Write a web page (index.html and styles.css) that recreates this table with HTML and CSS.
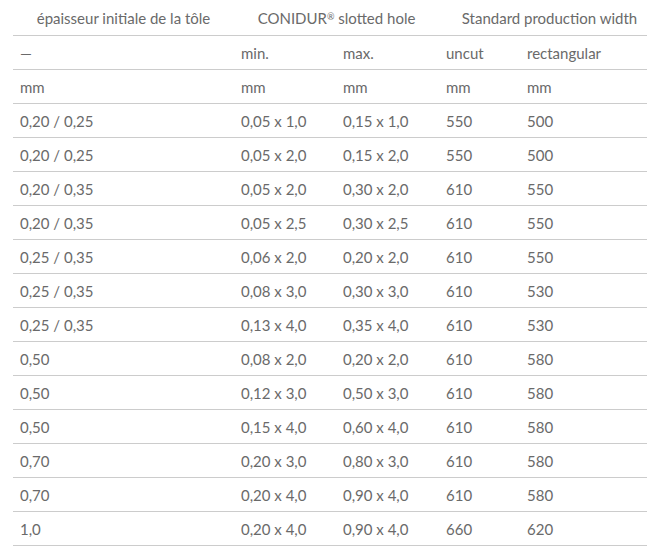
FILE: index.html
```html
<!DOCTYPE html>
<html lang="fr">
<head>
<meta charset="utf-8">
<title>CONIDUR slotted hole</title>
<link rel="stylesheet" href="styles.css">
</head>
<body>
<div class="wrap">
<table class="spec">
<colgroup>
<col class="c1"><col class="c2"><col class="c3"><col class="c4"><col class="c5">
</colgroup>
<thead>
<tr class="head">
<th>épaisseur initiale de la tôle</th>
<th colspan="2">CONIDUR<sup>®</sup> slotted hole</th>
<th colspan="2">Standard production width</th>
</tr>
</thead>
<tbody>
<tr><td>—</td><td>min.</td><td>max.</td><td>uncut</td><td>rectangular</td></tr>
<tr><td>mm</td><td>mm</td><td>mm</td><td>mm</td><td>mm</td></tr>
<tr><td>0,20 / 0,25</td><td>0,05 x 1,0</td><td>0,15 x 1,0</td><td>550</td><td>500</td></tr>
<tr><td>0,20 / 0,25</td><td>0,05 x 2,0</td><td>0,15 x 2,0</td><td>550</td><td>500</td></tr>
<tr><td>0,20 / 0,35</td><td>0,05 x 2,0</td><td>0,30 x 2,0</td><td>610</td><td>550</td></tr>
<tr><td>0,20 / 0,35</td><td>0,05 x 2,5</td><td>0,30 x 2,5</td><td>610</td><td>550</td></tr>
<tr><td>0,25 / 0,35</td><td>0,06 x 2,0</td><td>0,20 x 2,0</td><td>610</td><td>550</td></tr>
<tr><td>0,25 / 0,35</td><td>0,08 x 3,0</td><td>0,30 x 3,0</td><td>610</td><td>530</td></tr>
<tr><td>0,25 / 0,35</td><td>0,13 x 4,0</td><td>0,35 x 4,0</td><td>610</td><td>530</td></tr>
<tr><td>0,50</td><td>0,08 x 2,0</td><td>0,20 x 2,0</td><td>610</td><td>580</td></tr>
<tr><td>0,50</td><td>0,12 x 3,0</td><td>0,50 x 3,0</td><td>610</td><td>580</td></tr>
<tr><td>0,50</td><td>0,15 x 4,0</td><td>0,60 x 4,0</td><td>610</td><td>580</td></tr>
<tr><td>0,70</td><td>0,20 x 3,0</td><td>0,80 x 3,0</td><td>610</td><td>580</td></tr>
<tr><td>0,70</td><td>0,20 x 4,0</td><td>0,90 x 4,0</td><td>610</td><td>580</td></tr>
<tr><td>1,0</td><td>0,20 x 4,0</td><td>0,90 x 4,0</td><td>660</td><td>620</td></tr>
</tbody>
</table>
</div>
</body>
</html>
```

FILE: styles.css
```css
html, body {
  margin: 0;
  padding: 0;
  background: #ffffff;
}
body {
  font-family: Lato, "Liberation Sans", sans-serif;
  font-weight: 400;
  color: #6a6a6a;
  overflow: hidden;
}
.wrap {
  padding-left: 13px;
  width: 660px;
}
.spec {
  border-collapse: collapse;
  table-layout: fixed;
  width: 647px;
}
.c1 { width: 221px; }
.c2 { width: 102px; }
.c3 { width: 103px; }
.c4 { width: 81px; }
.c5 { width: 140px; }
.spec th {
  font-weight: 400;
  font-size: 15px;
  text-align: center;
  height: 35px;
  padding: 0 7px;
  vertical-align: middle;
  border-bottom: 1px solid #cccccc;
  white-space: nowrap;
}
.spec th sup {
  font-size: 9px;
  vertical-align: 4px;
  line-height: 0;
}
.spec td {
  font-size: 15px;
  text-align: left;
  height: 33px;
  padding: 0 7px;
  vertical-align: middle;
  border-bottom: 1px solid #cccccc;
  white-space: nowrap;
}
```
